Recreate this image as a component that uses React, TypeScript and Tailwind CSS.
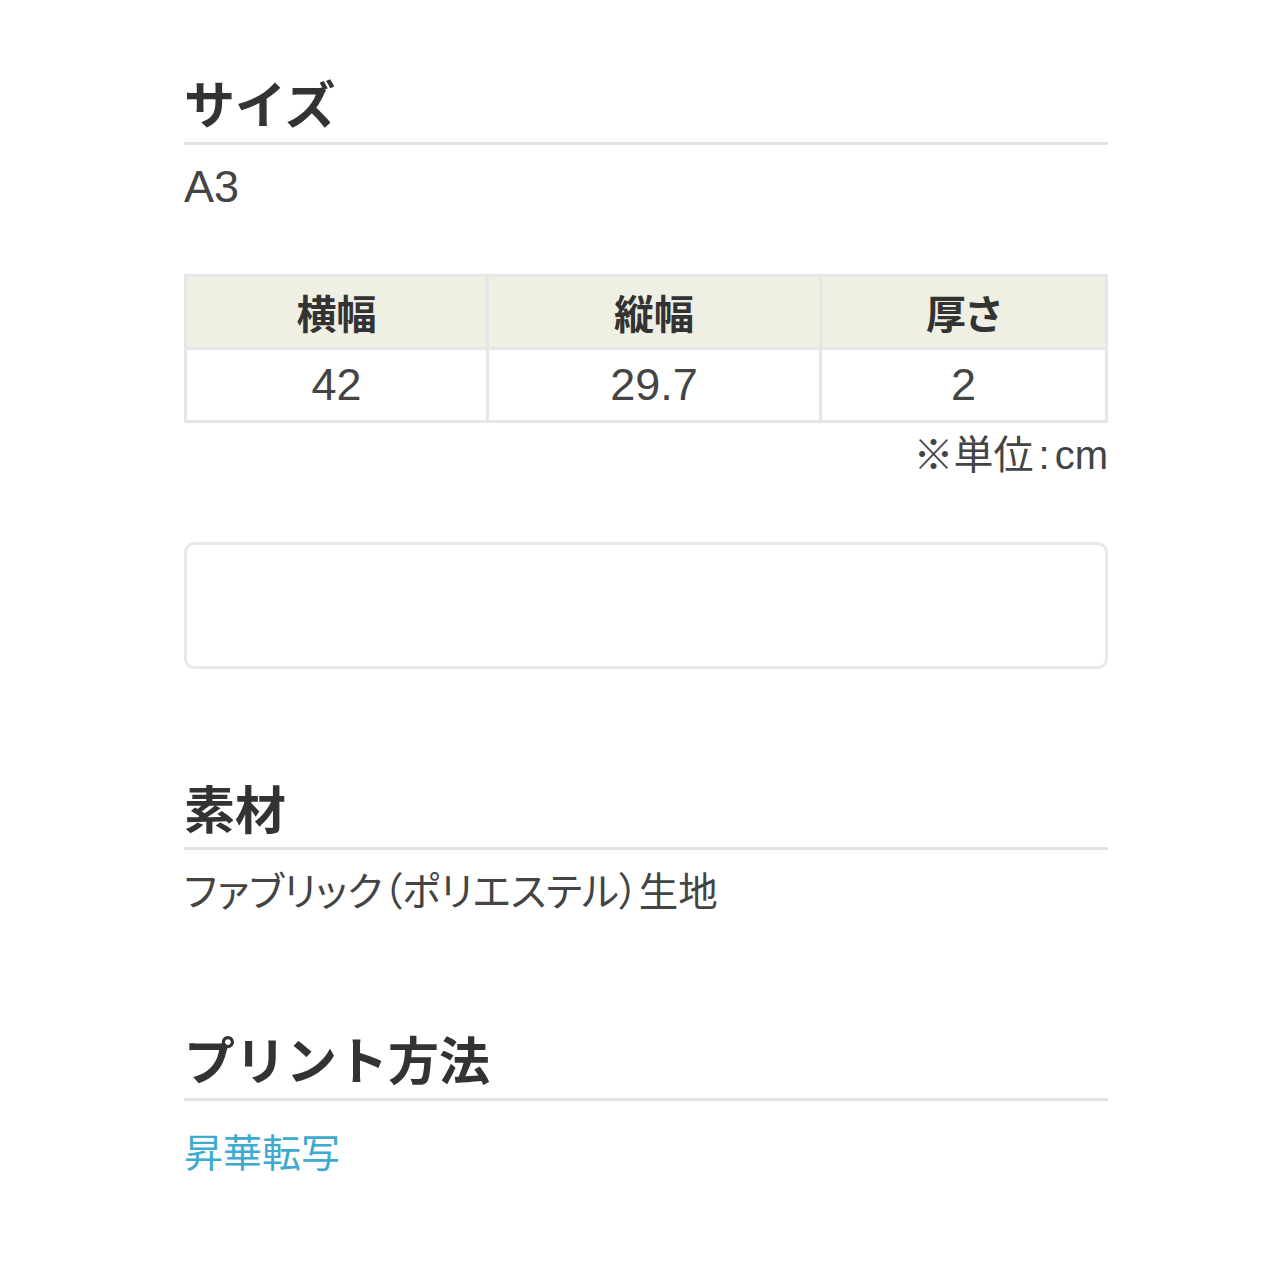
const jp = "font-['Noto_Sans_CJK_JP',sans-serif] [font-feature-settings:'palt']";
const jpTitle = "font-['Noto_Sans_CJK_JP',sans-serif]";
const latin = "font-['Liberation_Sans','Noto_Sans_CJK_JP',sans-serif]";

function SectionTitle({ title, className = "" }: { title: string; className?: string }) {
  return (
    <h2
      className={`${jpTitle} ${className} border-b-[3px] border-[#e3e3e3] pb-[10px] text-[51px] font-bold leading-[60px] text-[#333333]`}
    >
      {title}
    </h2>
  );
}

const headers = ["横幅", "縦幅", "厚さ"];
const values = ["42", "29.7", "2"];

export default function App() {
  return (
    <main className="min-h-screen bg-white">
      <div className="ml-[184px] flex w-[924px] flex-col pt-[72px] pb-[100px]">
        <SectionTitle title="サイズ" />
        <p className={`${latin} mt-[15px] text-[45px] leading-[53px] text-[#444444]`}>A3</p>

        <div className="mt-[61px] grid grid-cols-[299px_330px_283px] gap-[3px] bg-[#e6e6e6] p-[3px]">
          {headers.map((h) => (
            <div
              key={h}
              className={`${jp} flex h-[70px] items-center justify-center bg-[#efefe4] text-[40px] font-bold text-[#333333]`}
            >
              {h}
            </div>
          ))}
          {values.map((v) => (
            <div
              key={v}
              className={`${latin} flex h-[70px] items-center justify-center bg-white text-[45px] text-[#444444]`}
            >
              {v}
            </div>
          ))}
        </div>
        <p className={`${latin} mt-[7px] text-right text-[40px] leading-[44px] text-[#444444]`}>
          <span className={jp}>※単位</span>
          <span className="mx-[5px]">:</span>cm
        </p>

        <div className="mt-[65px] h-[127px] rounded-[10px] border-[3px] border-[#e8e8e8] bg-white" />

        <SectionTitle title="素材" className="mt-[108px]" />
        <p className={`${jp} mt-[15px] text-[39.5px] leading-[47px] text-[#444444]`}>
          ファブリック（ポリエステル）生地
        </p>

        <SectionTitle title="プリント方法" className="mt-[116px]" />
        <p className={`${jp} mt-[26px] text-[39px] leading-[47px] text-[#3eaad0]`}>昇華転写</p>
      </div>
    </main>
  );
}
